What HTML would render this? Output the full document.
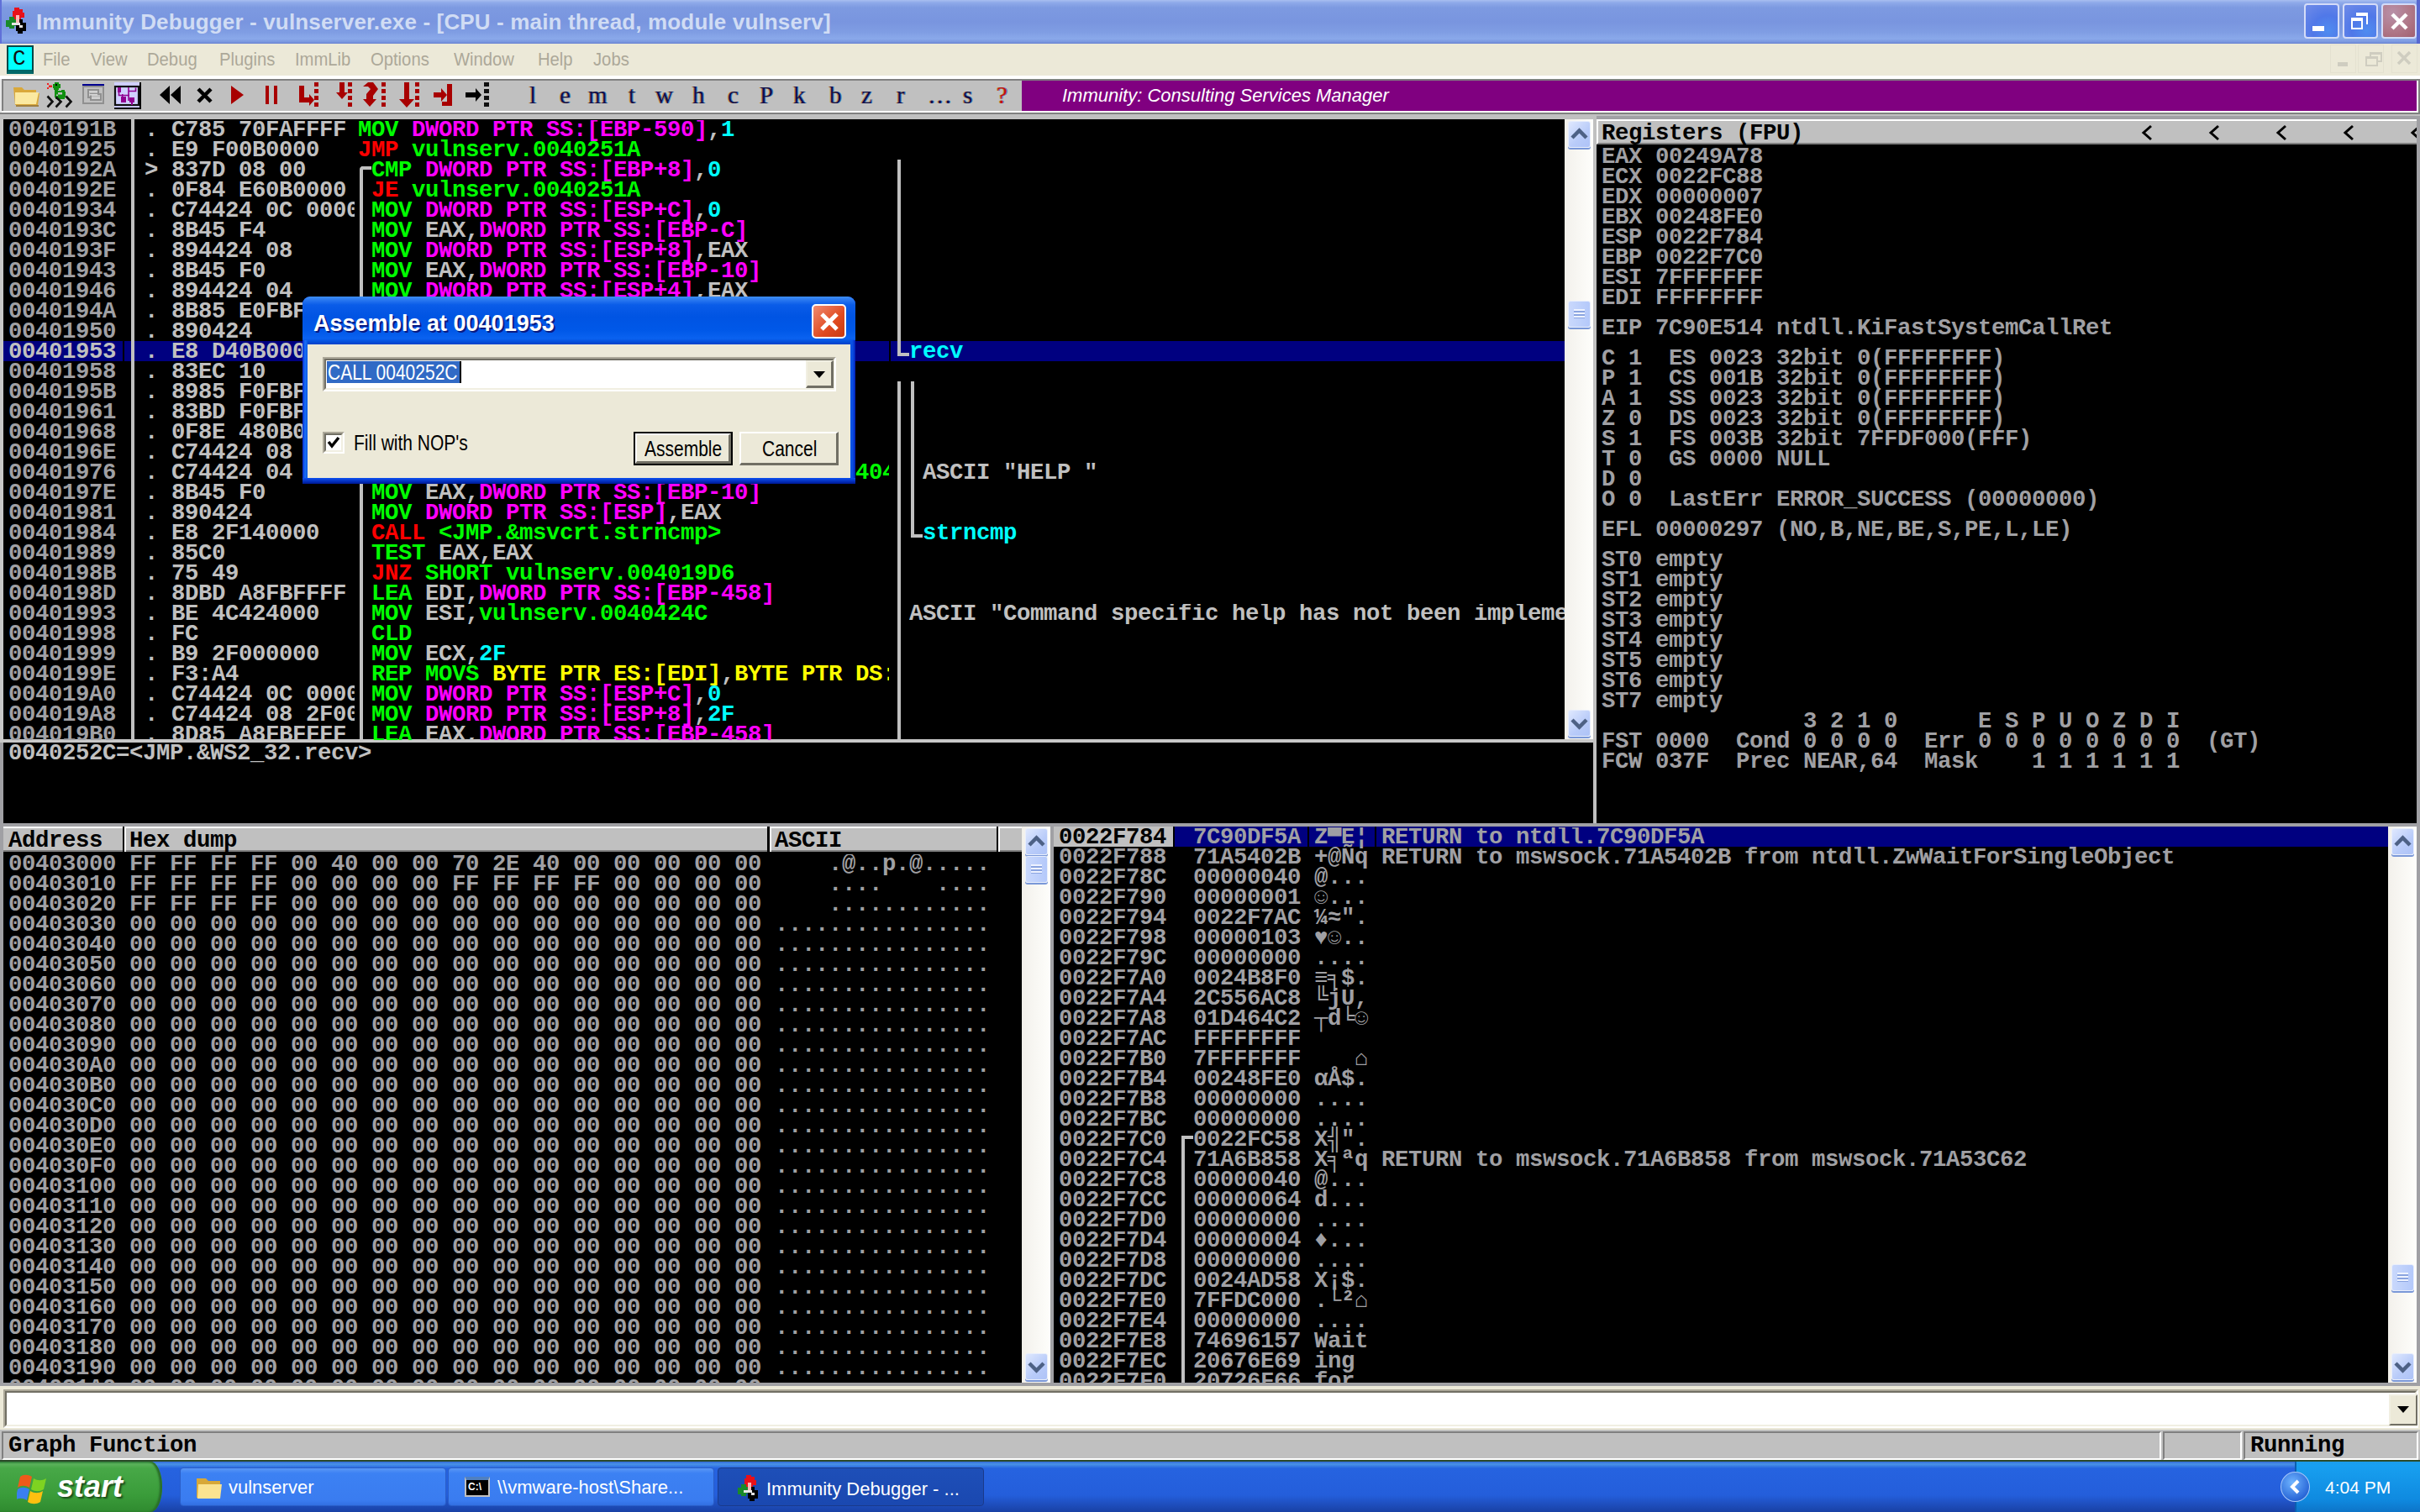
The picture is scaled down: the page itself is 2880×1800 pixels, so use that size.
<!DOCTYPE html><html><head><meta charset="utf-8"><title>Immunity Debugger</title><style>
html,body{margin:0;padding:0;}
body{width:2880px;height:1800px;overflow:hidden;position:relative;background:#c0c0c0;}
.a{position:absolute;box-sizing:border-box;}
.m{font-family:"Liberation Mono",monospace;font-weight:bold;font-size:27.33px;letter-spacing:-0.4px;line-height:24px;white-space:pre;}
.s{font-family:"Liberation Sans",sans-serif;white-space:pre;}
.clip{overflow:hidden;}
.cg{color:#00ff00}.cr{color:#ff0000}.cm{color:#ff00ff}.cc{color:#00ffff}.cy{color:#ffff00}.cl{color:#c0c0c0}.cd{color:#a0a0a4}.ck{color:#000000}.cw{color:#ffffff}</style></head><body><div class="a " style="left:0px;top:0px;width:2880px;height:52px;background:linear-gradient(#a9bff0 0px,#8faaea 3px,#7d9ae1 9px,#7995df 26px,#7f9de3 38px,#8aa9ea 46px,#7b98df 50px,#6680d0 52px);"></div>
<svg class="a" style="left:3px;top:6px" width="30" height="34" viewBox="0 0 30 34">
<path d="M14 3h6v2h4v4h2v6h-4v3h-8v-3h-2v-8h2z" fill="#e8101a"/>
<path d="M8 14h6v3h4v8h-4v3h-6v-2h-4v-8h4z" fill="#1a8a2a"/>
<path d="M18 17h6v4h4v10h-4v3h-6v-3h-2v-10h2z" fill="#000"/>
<path d="M11 21h10v3h-10z" fill="#e8e8e8"/><path d="M16 12h4v9h-4z" fill="#ffb8b8"/><path d="M20 24h4v3h-4z" fill="#e0e0e0"/>
</svg>
<div class="a s" style="left:43px;top:6px;font-weight:bold;font-size:26px;line-height:40px;color:#d0dcf4;letter-spacing:0.15px;">Immunity Debugger - vulnserver.exe - [CPU - main thread, module vulnserv]</div>
<div class="a " style="left:2742px;top:4px;width:42px;height:42px;background:radial-gradient(circle at 70% 80%,#4f8cf0,#5078e8 45%,#6a88e8 90%);border:2px solid #d4dcf8;border-radius:4px;"><div class="a" style="left:8px;top:25px;width:14px;height:6px;background:#fff"></div></div>
<div class="a " style="left:2788px;top:4px;width:42px;height:42px;background:radial-gradient(circle at 70% 80%,#4f8cf0,#5078e8 45%,#6a88e8 90%);border:2px solid #d4dcf8;border-radius:4px;"><div class="a" style="left:14px;top:9px;width:14px;height:14px;border:2px solid #fff;border-top-width:4px;border-left:none;border-bottom:none"></div><div class="a" style="left:8px;top:15px;width:14px;height:14px;border:2px solid #fff;border-top-width:4px;"></div></div>
<div class="a " style="left:2834px;top:4px;width:42px;height:42px;background:radial-gradient(circle at 30% 25%,#b890a8,#b07888 55%,#a06070);border:2px solid #d4dcf8;border-radius:4px;"><svg class="a" style="left:8px;top:8px" width="24" height="24"><path d="M3 3L20 20M20 3L3 20" stroke="#fff" stroke-width="4.5"/></svg></div>
<div class="a " style="left:2876px;top:0px;width:4px;height:52px;background:#5868d0;"></div>
<div class="a " style="left:0px;top:0px;width:2px;height:52px;background:#6070d8;"></div>
<div class="a " style="left:0px;top:52px;width:2880px;height:38px;background:#ece9d8;"></div>
<div class="a " style="left:8px;top:54px;width:32px;height:34px;background:#00ffff;border:2px solid #004848;border-bottom:5px solid #006868;"><div class="a m" style="left:5px;top:2px;color:#101010;font-weight:normal;font-size:26px;">C</div></div>
<div class="a s" style="left:51px;top:57px;font-size:22px;line-height:28px;color:#aca899;transform:scaleX(0.92);transform-origin:0 0;">File</div>
<div class="a s" style="left:108px;top:57px;font-size:22px;line-height:28px;color:#aca899;transform:scaleX(0.92);transform-origin:0 0;">View</div>
<div class="a s" style="left:175px;top:57px;font-size:22px;line-height:28px;color:#aca899;transform:scaleX(0.92);transform-origin:0 0;">Debug</div>
<div class="a s" style="left:261px;top:57px;font-size:22px;line-height:28px;color:#aca899;transform:scaleX(0.92);transform-origin:0 0;">Plugins</div>
<div class="a s" style="left:351px;top:57px;font-size:22px;line-height:28px;color:#aca899;transform:scaleX(0.92);transform-origin:0 0;">ImmLib</div>
<div class="a s" style="left:441px;top:57px;font-size:22px;line-height:28px;color:#aca899;transform:scaleX(0.92);transform-origin:0 0;">Options</div>
<div class="a s" style="left:540px;top:57px;font-size:22px;line-height:28px;color:#aca899;transform:scaleX(0.92);transform-origin:0 0;">Window</div>
<div class="a s" style="left:640px;top:57px;font-size:22px;line-height:28px;color:#aca899;transform:scaleX(0.92);transform-origin:0 0;">Help</div>
<div class="a s" style="left:706px;top:57px;font-size:22px;line-height:28px;color:#aca899;transform:scaleX(0.92);transform-origin:0 0;">Jobs</div>
<div class="a " style="left:2773px;top:53px;width:31px;height:34px;border:1px solid #e4e1d0;background:#ece9d8;"></div>
<div class="a " style="left:2806px;top:53px;width:31px;height:34px;border:1px solid #e4e1d0;background:#ece9d8;"></div>
<div class="a " style="left:2846px;top:53px;width:31px;height:34px;border:1px solid #e4e1d0;background:#ece9d8;"></div>
<div class="a" style="left:2782px;top:74px;width:12px;height:5px;background:#cfcdc0"></div>
<div class="a" style="left:2820px;top:62px;width:15px;height:12px;border:2px solid #cfcdc0;border-top-width:3px"></div><div class="a" style="left:2815px;top:67px;width:15px;height:12px;border:2px solid #cfcdc0;border-top-width:3px;background:#ece9d8"></div>
<svg class="a" style="left:2852px;top:60px" width="18" height="18"><path d="M2 2L16 16M16 2L2 16" stroke="#cfcdc0" stroke-width="3.5"/></svg>
<div class="a " style="left:0px;top:90px;width:2880px;height:4px;background:#ffffff;"></div>
<div class="a " style="left:0px;top:94px;width:2880px;height:42px;background:#c0c0c0;"></div>
<div class="a " style="left:2px;top:94px;width:2878px;height:40px;border-top:2px solid #808080;border-left:2px solid #808080;"></div>
<div class="a " style="left:0px;top:94px;width:2px;height:42px;background:#e8e8e8;"></div>
<div class="a " style="left:2px;top:132px;width:2876px;height:2px;background:#ffffff;"></div>
<div class="a " style="left:0px;top:134px;width:2880px;height:2px;background:#808080;"></div>
<div class="a " style="left:2878px;top:94px;width:2px;height:42px;background:#808080;"></div>
<svg class="a" style="left:0px;top:94px" width="600" height="40" viewBox="0 94 600 40">
<!-- folder -->
<path d="M16 104h10l3 3h14v4h4l-2 14H18z" fill="#d9a83a"/>
<path d="M18 110h28l-3 14H18z" fill="#fbe9a0"/>
<path d="M19 125h27v2H19z" fill="#a08040"/>
<!-- snake -->
<rect x="56" y="99" width="2" height="2" fill="#f02020"/><rect x="56" y="104" width="2" height="2" fill="#f02020"/><rect x="58" y="101.5" width="4" height="2.5" fill="#f02020"/>
<path d="M63 100h2v-2h5v2h2v5h-2v2h-1v1h4v-1h4v2h1v7h-1v2h-11v-2h-1v-9h-1v-2h-1z" fill="#109010"/>
<rect x="66" y="100" width="2" height="2" fill="#000"/>
<rect x="69" y="110" width="5" height="2.5" fill="#c0c0c0"/><rect x="67" y="112.5" width="2" height="1.5" fill="#c0c0c0"/>
<path d="M56.5 114.5l6 6.5-6 6.5M66.5 115.5l6 5.5-6 6.5M78.5 114.5l6 6.5-6 6.5" stroke="#101010" stroke-width="2.6" fill="none"/>
<!-- window icon -->
<rect x="98" y="100" width="26" height="2.5" fill="#000090"/>
<rect x="99" y="103" width="24" height="20" fill="none" stroke="#909090" stroke-width="2"/>
<rect x="105" y="107" width="12" height="9" fill="none" stroke="#909090" stroke-width="2"/>
<rect x="108" y="112" width="12" height="7" fill="#c0c0c0" stroke="#909090" stroke-width="2"/>
<rect x="106" y="108" width="10" height="1.5" fill="#d8d8d8"/><rect x="106" y="112" width="10" height="1.5" fill="#d8d8d8"/><rect x="109" y="116" width="10" height="1.5" fill="#d8d8d8"/>
<!-- graph icon -->
<rect x="136" y="98" width="30" height="30" fill="#d0d0ff"/>
<rect x="137" y="103" width="28" height="22" fill="none" stroke="#101010" stroke-width="2.2"/>
<rect x="166" y="98" width="2" height="32" fill="#000"/><rect x="136" y="128" width="32" height="2" fill="#000"/>
<rect x="140" y="104" width="4" height="6" fill="#900090"/>
<path d="M141.5 104v9.5h12.5M153 104v16M153 108.5h8.5v-4" stroke="#900090" stroke-width="1.6" fill="none"/>
<rect x="144" y="115" width="6" height="7" fill="#900090"/><rect x="145" y="112" width="1.5" height="3" fill="#900090"/>
<rect x="154" y="116" width="6" height="6" fill="#900090"/><rect x="156" y="122" width="2" height="3" fill="#900090"/>
<!-- rewind -->
<path d="M190 113l12-11v22zM203 113l12-11v22z" fill="#000"/>
<!-- close X -->
<path d="M236 106l15 15M251 106l-15 15" stroke="#000" stroke-width="4.5"/>
<!-- play -->
<path d="M275 102l15 11-15 11z" fill="#a80000"/>
<!-- pause -->
<rect x="316" y="102" width="4" height="22" fill="#a80000"/><rect x="326" y="102" width="4" height="22" fill="#a80000"/>
<!-- step into -->
<path d="M356 102h6v14h6v-4l6 7-6 7v-4h-12z" fill="#a80000"/>
<path d="M374 98h5v5h-5zM374 106h5v5h-5zM374 114h5v5h-5zM374 122h5v5h-5z" fill="#a80000"/>
<path d="M404 98h6v12h4l-7 8-7-8h4z" fill="#a80000"/>
<path d="M414 98h5v5h-5zM414 106h5v5h-5zM414 114h5v5h-5zM414 122h5v5h-5z" fill="#a80000"/>
<path d="M438 98h6l6 8-6 8v4h4l-8 9-8-9h4v-6l5-6-3-3h-6z" fill="#a80000"/>
<path d="M454 98h5v5h-5zM454 106h5v5h-5zM454 114h5v5h-5zM454 122h5v5h-5z" fill="#a80000"/>
<path d="M481 98h6v20h6l-9 10-9-10h6z" fill="#a80000"/>
<path d="M494 98h5v5h-5zM494 106h5v5h-5zM494 114h5v5h-5zM494 122h5v5h-5z" fill="#a80000"/>
<path d="M516 110h9v-5l7 8-7 8v-5h-9z" fill="#a80000"/>
<path d="M532 100h6v26h-12v-5h6z" fill="#a80000"/>
<path d="M554 110h12v-5l7 8-7 8v-5h-12z" fill="#000"/>
<path d="M576 98h6v5h-6zM576 106h6v5h-6zM576 114h6v5h-6zM576 122h6v5h-6z" fill="#101010"/>
</svg>
<div class="a" style="left:630px;top:96px;font-family:'Liberation Serif',serif;font-size:29px;line-height:34px;color:#10104a;white-space:pre;text-shadow:-1px 0 #c08840,1px 0 #4080c0">l</div>
<div class="a" style="left:666px;top:96px;font-family:'Liberation Serif',serif;font-size:29px;line-height:34px;color:#10104a;white-space:pre;text-shadow:-1px 0 #c08840,1px 0 #4080c0">e</div>
<div class="a" style="left:700px;top:96px;font-family:'Liberation Serif',serif;font-size:29px;line-height:34px;color:#10104a;white-space:pre;text-shadow:-1px 0 #c08840,1px 0 #4080c0">m</div>
<div class="a" style="left:748px;top:96px;font-family:'Liberation Serif',serif;font-size:29px;line-height:34px;color:#10104a;white-space:pre;text-shadow:-1px 0 #c08840,1px 0 #4080c0">t</div>
<div class="a" style="left:780px;top:96px;font-family:'Liberation Serif',serif;font-size:29px;line-height:34px;color:#10104a;white-space:pre;text-shadow:-1px 0 #c08840,1px 0 #4080c0">w</div>
<div class="a" style="left:824px;top:96px;font-family:'Liberation Serif',serif;font-size:29px;line-height:34px;color:#10104a;white-space:pre;text-shadow:-1px 0 #c08840,1px 0 #4080c0">h</div>
<div class="a" style="left:866px;top:96px;font-family:'Liberation Serif',serif;font-size:29px;line-height:34px;color:#10104a;white-space:pre;text-shadow:-1px 0 #c08840,1px 0 #4080c0">c</div>
<div class="a" style="left:904px;top:96px;font-family:'Liberation Serif',serif;font-size:29px;line-height:34px;color:#10104a;white-space:pre;text-shadow:-1px 0 #c08840,1px 0 #4080c0">P</div>
<div class="a" style="left:944px;top:96px;font-family:'Liberation Serif',serif;font-size:29px;line-height:34px;color:#10104a;white-space:pre;text-shadow:-1px 0 #c08840,1px 0 #4080c0">k</div>
<div class="a" style="left:987px;top:96px;font-family:'Liberation Serif',serif;font-size:29px;line-height:34px;color:#10104a;white-space:pre;text-shadow:-1px 0 #c08840,1px 0 #4080c0">b</div>
<div class="a" style="left:1025px;top:96px;font-family:'Liberation Serif',serif;font-size:29px;line-height:34px;color:#10104a;white-space:pre;text-shadow:-1px 0 #c08840,1px 0 #4080c0">z</div>
<div class="a" style="left:1067px;top:96px;font-family:'Liberation Serif',serif;font-size:29px;line-height:34px;color:#10104a;white-space:pre;text-shadow:-1px 0 #c08840,1px 0 #4080c0">r</div>
<div class="a" style="left:1104px;top:96px;font-family:'Liberation Serif',serif;font-size:29px;line-height:34px;color:#10104a;white-space:pre;text-shadow:-1px 0 #c08840,1px 0 #4080c0">…</div>
<div class="a" style="left:1146px;top:96px;font-family:'Liberation Serif',serif;font-size:29px;line-height:34px;color:#10104a;white-space:pre;text-shadow:-1px 0 #c08840,1px 0 #4080c0">s</div>
<div class="a" style="left:1186px;top:96px;font-family:'Liberation Serif',serif;font-size:29px;line-height:34px;color:#c01010;white-space:pre;text-shadow:-1px 0 #c08840,1px 0 #4080c0">?</div>
<div class="a " style="left:1216px;top:96px;width:1662px;height:38px;background:#800080;border-right:2px solid #fff;border-bottom:2px solid #fff;"></div>
<div class="a s" style="left:1264px;top:98px;font-style:italic;font-size:22px;line-height:32px;color:#ffffff;"><span class="cw">Immunity: Consulting Services Manager</span></div>
<div class="a " style="left:0px;top:136px;width:2880px;height:6px;background:#c0c0c0;"></div>
<div class="a " style="left:0px;top:142px;width:4px;height:1504px;background:#c8c8c8;"></div>
<div class="a " style="left:4px;top:142px;width:1858px;height:738px;background:#000;"></div>
<div class="a" style="left:1862px;top:142px;width:34px;height:738px;background:linear-gradient(90deg,#f3f1ec,#fefefb);border-left:1px solid #f0efe8"></div><div class="a" style="left:1866px;top:144px;width:27px;height:32px;border-radius:3px;background:linear-gradient(135deg,#dfe8fe,#b8cbf9 60%,#aec3f7);border:1px solid #e8eefc;box-shadow:0 2px 0 #7a98d8"></div><svg class="a" style="left:1866px;top:144px" width="27" height="32"><path d="M5 20l8.5-8.5 8.5 8.5" stroke="#4d6185" stroke-width="4.5" fill="none"/></svg><div class="a" style="left:1866px;top:845px;width:27px;height:32px;border-radius:3px;background:linear-gradient(135deg,#dfe8fe,#b8cbf9 60%,#aec3f7);border:1px solid #e8eefc;box-shadow:0 2px 0 #7a98d8"></div><svg class="a" style="left:1866px;top:845px" width="27" height="32"><path d="M5 12l8.5 8.5 8.5-8.5" stroke="#4d6185" stroke-width="4.5" fill="none"/></svg><div class="a" style="left:1866px;top:358px;width:27px;height:32px;border-radius:3px;background:linear-gradient(90deg,#c9d8fc,#b4c9fa);border:1px solid #e8eefc;box-shadow:0 2px 0 #7a98d8"></div><div class="a" style="left:1873px;top:368px;width:13px;height:11px;background:repeating-linear-gradient(#eef3ff 0 2px,#8aa4e0 2px 4px)"></div>
<div class="a " style="left:1896px;top:142px;width:4px;height:842px;background:#c0c0c0;"></div>
<div class="a " style="left:0px;top:880px;width:1896px;height:4px;background:#c8c8c8;"></div>
<div class="a " style="left:4px;top:884px;width:1892px;height:96px;background:#000;"></div>
<div class="a " style="left:0px;top:884px;width:4px;height:96px;background:#a0a0a4;"></div>
<div class="a " style="left:1900px;top:138px;width:980px;height:4px;background:#a0a0a4;"></div>
<div class="a " style="left:1900px;top:142px;width:976px;height:838px;background:#000;"></div>
<div class="a " style="left:2876px;top:138px;width:4px;height:846px;background:#a0a0a4;"></div>
<div class="a " style="left:1900px;top:142px;width:976px;height:30px;background:#c0c0c0;border-top:2px solid #fff;border-left:2px solid #fff;border-bottom:2px solid #808080;"></div>
<div class="a " style="left:0px;top:980px;width:2880px;height:4px;background:#a0a0a4;"></div>
<div class="a " style="left:0px;top:984px;width:4px;height:662px;background:#a0a0a4;"></div>
<div class="a " style="left:4px;top:984px;width:1212px;height:662px;background:#000;"></div>
<div class="a" style="left:1216px;top:984px;width:34px;height:662px;background:linear-gradient(90deg,#f3f1ec,#fefefb);border-left:1px solid #f0efe8"></div><div class="a" style="left:1220px;top:986px;width:27px;height:32px;border-radius:3px;background:linear-gradient(135deg,#dfe8fe,#b8cbf9 60%,#aec3f7);border:1px solid #e8eefc;box-shadow:0 2px 0 #7a98d8"></div><svg class="a" style="left:1220px;top:986px" width="27" height="32"><path d="M5 20l8.5-8.5 8.5 8.5" stroke="#4d6185" stroke-width="4.5" fill="none"/></svg><div class="a" style="left:1220px;top:1611px;width:27px;height:32px;border-radius:3px;background:linear-gradient(135deg,#dfe8fe,#b8cbf9 60%,#aec3f7);border:1px solid #e8eefc;box-shadow:0 2px 0 #7a98d8"></div><svg class="a" style="left:1220px;top:1611px" width="27" height="32"><path d="M5 12l8.5 8.5 8.5-8.5" stroke="#4d6185" stroke-width="4.5" fill="none"/></svg><div class="a" style="left:1220px;top:1019px;width:27px;height:32px;border-radius:3px;background:linear-gradient(90deg,#c9d8fc,#b4c9fa);border:1px solid #e8eefc;box-shadow:0 2px 0 #7a98d8"></div><div class="a" style="left:1227px;top:1029px;width:13px;height:11px;background:repeating-linear-gradient(#eef3ff 0 2px,#8aa4e0 2px 4px)"></div>
<div class="a " style="left:1250px;top:984px;width:4px;height:662px;background:#a0a0a4;"></div>
<div class="a " style="left:1254px;top:984px;width:1588px;height:662px;background:#000;"></div>
<div class="a" style="left:2842px;top:984px;width:34px;height:662px;background:linear-gradient(90deg,#f3f1ec,#fefefb);border-left:1px solid #f0efe8"></div><div class="a" style="left:2846px;top:986px;width:27px;height:32px;border-radius:3px;background:linear-gradient(135deg,#dfe8fe,#b8cbf9 60%,#aec3f7);border:1px solid #e8eefc;box-shadow:0 2px 0 #7a98d8"></div><svg class="a" style="left:2846px;top:986px" width="27" height="32"><path d="M5 20l8.5-8.5 8.5 8.5" stroke="#4d6185" stroke-width="4.5" fill="none"/></svg><div class="a" style="left:2846px;top:1611px;width:27px;height:32px;border-radius:3px;background:linear-gradient(135deg,#dfe8fe,#b8cbf9 60%,#aec3f7);border:1px solid #e8eefc;box-shadow:0 2px 0 #7a98d8"></div><svg class="a" style="left:2846px;top:1611px" width="27" height="32"><path d="M5 12l8.5 8.5 8.5-8.5" stroke="#4d6185" stroke-width="4.5" fill="none"/></svg><div class="a" style="left:2846px;top:1505px;width:27px;height:32px;border-radius:3px;background:linear-gradient(90deg,#c9d8fc,#b4c9fa);border:1px solid #e8eefc;box-shadow:0 2px 0 #7a98d8"></div><div class="a" style="left:2853px;top:1515px;width:13px;height:11px;background:repeating-linear-gradient(#eef3ff 0 2px,#8aa4e0 2px 4px)"></div>
<div class="a " style="left:2876px;top:984px;width:4px;height:662px;background:#a0a0a4;"></div>
<div class="a " style="left:0px;top:1646px;width:2880px;height:4px;background:#a0a0a4;"></div>
<div class="a " style="left:4px;top:406px;width:142px;height:24px;background:#000080;"></div>
<div class="a " style="left:148px;top:406px;width:8px;height:24px;background:#000080;"></div>
<div class="a " style="left:160px;top:406px;width:262px;height:24px;background:#000080;"></div>
<div class="a " style="left:424px;top:406px;width:634px;height:24px;background:#000080;"></div>
<div class="a " style="left:1060px;top:406px;width:802px;height:24px;background:#000080;"></div>
<div class="a " style="left:156px;top:142px;width:4px;height:738px;background:#c0c0c0;"></div>
<div class="a m clip" style="left:10px;top:143px;width:136px;height:738px;"><div style="height:24px"><span class="cd">0040191B</span></div><div style="height:24px"><span class="cd">00401925</span></div><div style="height:24px"><span class="cd">0040192A</span></div><div style="height:24px"><span class="cd">0040192E</span></div><div style="height:24px"><span class="cd">00401934</span></div><div style="height:24px"><span class="cd">0040193C</span></div><div style="height:24px"><span class="cd">0040193F</span></div><div style="height:24px"><span class="cd">00401943</span></div><div style="height:24px"><span class="cd">00401946</span></div><div style="height:24px"><span class="cd">0040194A</span></div><div style="height:24px"><span class="cd">00401950</span></div><div style="height:24px"><span class="cl">00401953</span></div><div style="height:24px"><span class="cd">00401958</span></div><div style="height:24px"><span class="cd">0040195B</span></div><div style="height:24px"><span class="cd">00401961</span></div><div style="height:24px"><span class="cd">00401968</span></div><div style="height:24px"><span class="cd">0040196E</span></div><div style="height:24px"><span class="cd">00401976</span></div><div style="height:24px"><span class="cd">0040197E</span></div><div style="height:24px"><span class="cd">00401981</span></div><div style="height:24px"><span class="cd">00401984</span></div><div style="height:24px"><span class="cd">00401989</span></div><div style="height:24px"><span class="cd">0040198B</span></div><div style="height:24px"><span class="cd">0040198D</span></div><div style="height:24px"><span class="cd">00401993</span></div><div style="height:24px"><span class="cd">00401998</span></div><div style="height:24px"><span class="cd">00401999</span></div><div style="height:24px"><span class="cd">0040199E</span></div><div style="height:24px"><span class="cd">004019A0</span></div><div style="height:24px"><span class="cd">004019A8</span></div><div style="height:24px"><span class="cd">004019B0</span></div></div>
<div class="a m clip" style="left:172px;top:143px;width:250px;height:738px;"><div style="height:24px"><span class="cl">. C785 70FAFFFF</span></div><div style="height:24px"><span class="cl">. E9 F00B0000</span></div><div style="height:24px"><span class="cl">&gt; 837D 08 00</span></div><div style="height:24px"><span class="cl">. 0F84 E60B0000</span></div><div style="height:24px"><span class="cl">. C74424 0C 00000000</span></div><div style="height:24px"><span class="cl">. 8B45 F4</span></div><div style="height:24px"><span class="cl">. 894424 08</span></div><div style="height:24px"><span class="cl">. 8B45 F0</span></div><div style="height:24px"><span class="cl">. 894424 04</span></div><div style="height:24px"><span class="cl">. 8B85 E0FBFFFF</span></div><div style="height:24px"><span class="cl">. 890424</span></div><div style="height:24px"><span class="cl">. E8 D40B0000</span></div><div style="height:24px"><span class="cl">. 83EC 10</span></div><div style="height:24px"><span class="cl">. 8985 F0FBFFFF</span></div><div style="height:24px"><span class="cl">. 83BD F0FBFFFF 00</span></div><div style="height:24px"><span class="cl">. 0F8E 480B0000</span></div><div style="height:24px"><span class="cl">. C74424 08 05000000</span></div><div style="height:24px"><span class="cl">. C74424 04 44404000</span></div><div style="height:24px"><span class="cl">. 8B45 F0</span></div><div style="height:24px"><span class="cl">. 890424</span></div><div style="height:24px"><span class="cl">. E8 2F140000</span></div><div style="height:24px"><span class="cl">. 85C0</span></div><div style="height:24px"><span class="cl">. 75 49</span></div><div style="height:24px"><span class="cl">. 8DBD A8FBFFFF</span></div><div style="height:24px"><span class="cl">. BE 4C424000</span></div><div style="height:24px"><span class="cl">. FC</span></div><div style="height:24px"><span class="cl">. B9 2F000000</span></div><div style="height:24px"><span class="cl">. F3:A4</span></div><div style="height:24px"><span class="cl">. C74424 0C 00000000</span></div><div style="height:24px"><span class="cl">. C74424 08 2F000000</span></div><div style="height:24px"><span class="cl">. 8D85 A8FBFFFF</span></div></div>
<div class="a m clip" style="left:426px;top:143px;width:632px;height:738px;"><div style="height:24px"><span class="cg">MOV </span><span class="cm">DWORD PTR SS:[EBP-590]</span><span class="cl">,</span><span class="cc">1</span></div><div style="height:24px"><span class="cr">JMP </span><span class="cg">vulnserv.0040251A</span></div><div style="height:24px"><span class="cl"> </span><span class="cg">CMP </span><span class="cm">DWORD PTR SS:[EBP+8]</span><span class="cl">,</span><span class="cc">0</span></div><div style="height:24px"><span class="cl"> </span><span class="cr">JE </span><span class="cg">vulnserv.0040251A</span></div><div style="height:24px"><span class="cl"> </span><span class="cg">MOV </span><span class="cm">DWORD PTR SS:[ESP+C]</span><span class="cl">,</span><span class="cc">0</span></div><div style="height:24px"><span class="cl"> </span><span class="cg">MOV </span><span class="cl">EAX,</span><span class="cm">DWORD PTR SS:[EBP-C]</span></div><div style="height:24px"><span class="cl"> </span><span class="cg">MOV </span><span class="cm">DWORD PTR SS:[ESP+8]</span><span class="cl">,EAX</span></div><div style="height:24px"><span class="cl"> </span><span class="cg">MOV </span><span class="cl">EAX,</span><span class="cm">DWORD PTR SS:[EBP-10]</span></div><div style="height:24px"><span class="cl"> </span><span class="cg">MOV </span><span class="cm">DWORD PTR SS:[ESP+4]</span><span class="cl">,EAX</span></div><div style="height:24px"><span class="cl"> </span><span class="cg">MOV </span><span class="cl">EAX,</span><span class="cm">DWORD PTR SS:[EBP-420]</span></div><div style="height:24px"><span class="cl"> </span><span class="cg">MOV </span><span class="cm">DWORD PTR SS:[ESP]</span><span class="cl">,EAX</span></div><div style="height:24px"><span class="cl"> </span><span class="cr">CALL </span><span class="cg">&lt;JMP.&amp;WS2_32.recv&gt;</span></div><div style="height:24px"><span class="cl"> </span><span class="cg">SUB </span><span class="cl">ESP,</span><span class="cc">10</span></div><div style="height:24px"><span class="cl"> </span><span class="cg">MOV </span><span class="cm">DWORD PTR SS:[EBP-410]</span><span class="cl">,EAX</span></div><div style="height:24px"><span class="cl"> </span><span class="cg">CMP </span><span class="cm">DWORD PTR SS:[EBP-410]</span><span class="cl">,</span><span class="cc">0</span></div><div style="height:24px"><span class="cl"> </span><span class="cr">JLE </span><span class="cg">vulnserv.004024B6</span></div><div style="height:24px"><span class="cl"> </span><span class="cg">MOV </span><span class="cm">DWORD PTR SS:[ESP+8]</span><span class="cl">,</span><span class="cc">5</span></div><div style="height:24px"><span class="cl"> </span><span class="cg">MOV </span><span class="cm">DWORD PTR SS:[ESP+4]</span><span class="cl">,</span><span class="cg">vulnserv.00404044</span></div><div style="height:24px"><span class="cl"> </span><span class="cg">MOV </span><span class="cl">EAX,</span><span class="cm">DWORD PTR SS:[EBP-10]</span></div><div style="height:24px"><span class="cl"> </span><span class="cg">MOV </span><span class="cm">DWORD PTR SS:[ESP]</span><span class="cl">,EAX</span></div><div style="height:24px"><span class="cl"> </span><span class="cr">CALL </span><span class="cg">&lt;JMP.&amp;msvcrt.strncmp&gt;</span></div><div style="height:24px"><span class="cl"> </span><span class="cg">TEST </span><span class="cl">EAX,EAX</span></div><div style="height:24px"><span class="cl"> </span><span class="cr">JNZ </span><span class="cg">SHORT vulnserv.004019D6</span></div><div style="height:24px"><span class="cl"> </span><span class="cg">LEA </span><span class="cl">EDI,</span><span class="cm">DWORD PTR SS:[EBP-458]</span></div><div style="height:24px"><span class="cl"> </span><span class="cg">MOV </span><span class="cl">ESI,</span><span class="cg">vulnserv.0040424C</span></div><div style="height:24px"><span class="cl"> </span><span class="cg">CLD</span></div><div style="height:24px"><span class="cl"> </span><span class="cg">MOV </span><span class="cl">ECX,</span><span class="cc">2F</span></div><div style="height:24px"><span class="cl"> </span><span class="cg">REP MOVS </span><span class="cy">BYTE PTR ES:[EDI]</span><span class="cl">,</span><span class="cy">BYTE PTR DS:[ESI]</span></div><div style="height:24px"><span class="cl"> </span><span class="cg">MOV </span><span class="cm">DWORD PTR SS:[ESP+C]</span><span class="cl">,</span><span class="cc">0</span></div><div style="height:24px"><span class="cl"> </span><span class="cg">MOV </span><span class="cm">DWORD PTR SS:[ESP+8]</span><span class="cl">,</span><span class="cc">2F</span></div><div style="height:24px"><span class="cl"> </span><span class="cg">LEA </span><span class="cl">EAX,</span><span class="cm">DWORD PTR SS:[EBP-458]</span></div></div>
<div class="a " style="left:428px;top:198px;width:4px;height:682px;background:#c0c0c0;border-top-left-radius:4px;"></div>
<div class="a " style="left:430px;top:198px;width:12px;height:4px;background:#c0c0c0;"></div>
<div class="a " style="left:1068px;top:190px;width:4px;height:234px;background:#c0c0c0;"></div>
<div class="a " style="left:1068px;top:420px;width:14px;height:4px;background:#c0c0c0;"></div>
<div class="a " style="left:1068px;top:454px;width:4px;height:426px;background:#c0c0c0;"></div>
<div class="a " style="left:1084px;top:454px;width:4px;height:186px;background:#c0c0c0;"></div>
<div class="a " style="left:1084px;top:636px;width:14px;height:4px;background:#c0c0c0;"></div>
<div class="a m clip" style="left:1082px;top:407px;width:780px;height:24px"><span class="cc">recv</span></div>
<div class="a m clip" style="left:1098px;top:551px;width:764px;height:24px"><span class="cl">ASCII "HELP "</span></div>
<div class="a m clip" style="left:1098px;top:623px;width:764px;height:24px"><span class="cc">strncmp</span></div>
<div class="a m clip" style="left:1082px;top:719px;width:780px;height:24px"><span class="cl">ASCII "Command specific help has not been implemented."</span></div>
<div class="a m" style="left:10px;top:885px;"><span class="cl">0040252C=&lt;JMP.&amp;WS2_32.recv&gt;</span></div>
<div class="a m" style="left:1906px;top:146px;line-height:26px;"><span class="ck">Registers (FPU)</span></div>
<svg class="a" style="left:2548px;top:148px" width="14" height="20"><path d="M12 2L3 10l9 8" stroke="#000" stroke-width="3" fill="none"/></svg>
<svg class="a" style="left:2628px;top:148px" width="14" height="20"><path d="M12 2L3 10l9 8" stroke="#000" stroke-width="3" fill="none"/></svg>
<svg class="a" style="left:2708px;top:148px" width="14" height="20"><path d="M12 2L3 10l9 8" stroke="#000" stroke-width="3" fill="none"/></svg>
<svg class="a" style="left:2788px;top:148px" width="14" height="20"><path d="M12 2L3 10l9 8" stroke="#000" stroke-width="3" fill="none"/></svg>
<svg class="a" style="left:2868px;top:148px" width="8" height="20"><path d="M12 2L3 10l9 8" stroke="#000" stroke-width="3" fill="none"/></svg>
<div class="a m" style="left:1906px;top:175px;"><span class="cd">EAX 00249A78</span></div>
<div class="a m" style="left:1906px;top:199px;"><span class="cd">ECX 0022FC88</span></div>
<div class="a m" style="left:1906px;top:223px;"><span class="cd">EDX 00000007</span></div>
<div class="a m" style="left:1906px;top:247px;"><span class="cd">EBX 00248FE0</span></div>
<div class="a m" style="left:1906px;top:271px;"><span class="cd">ESP 0022F784</span></div>
<div class="a m" style="left:1906px;top:295px;"><span class="cd">EBP 0022F7C0</span></div>
<div class="a m" style="left:1906px;top:319px;"><span class="cd">ESI 7FFFFFFF</span></div>
<div class="a m" style="left:1906px;top:343px;"><span class="cd">EDI FFFFFFFF</span></div>
<div class="a m" style="left:1906px;top:379px;"><span class="cd">EIP 7C90E514 ntdll.KiFastSystemCallRet</span></div>
<div class="a m" style="left:1906px;top:415px;"><span class="cd">C 1  ES 0023 32bit 0(FFFFFFFF)</span></div>
<div class="a m" style="left:1906px;top:439px;"><span class="cd">P 1  CS 001B 32bit 0(FFFFFFFF)</span></div>
<div class="a m" style="left:1906px;top:463px;"><span class="cd">A 1  SS 0023 32bit 0(FFFFFFFF)</span></div>
<div class="a m" style="left:1906px;top:487px;"><span class="cd">Z 0  DS 0023 32bit 0(FFFFFFFF)</span></div>
<div class="a m" style="left:1906px;top:511px;"><span class="cd">S 1  FS 003B 32bit 7FFDF000(FFF)</span></div>
<div class="a m" style="left:1906px;top:535px;"><span class="cd">T 0  GS 0000 NULL</span></div>
<div class="a m" style="left:1906px;top:559px;"><span class="cd">D 0</span></div>
<div class="a m" style="left:1906px;top:583px;"><span class="cd">O 0  LastErr ERROR_SUCCESS (00000000)</span></div>
<div class="a m" style="left:1906px;top:619px;"><span class="cd">EFL 00000297 (NO,B,NE,BE,S,PE,L,LE)</span></div>
<div class="a m" style="left:1906px;top:655px;"><span class="cd">ST0 empty</span></div>
<div class="a m" style="left:1906px;top:679px;"><span class="cd">ST1 empty</span></div>
<div class="a m" style="left:1906px;top:703px;"><span class="cd">ST2 empty</span></div>
<div class="a m" style="left:1906px;top:727px;"><span class="cd">ST3 empty</span></div>
<div class="a m" style="left:1906px;top:751px;"><span class="cd">ST4 empty</span></div>
<div class="a m" style="left:1906px;top:775px;"><span class="cd">ST5 empty</span></div>
<div class="a m" style="left:1906px;top:799px;"><span class="cd">ST6 empty</span></div>
<div class="a m" style="left:1906px;top:823px;"><span class="cd">ST7 empty</span></div>
<div class="a m" style="left:1906px;top:847px;"><span class="cd">               3 2 1 0      E S P U O Z D I</span></div>
<div class="a m" style="left:1906px;top:871px;"><span class="cd">FST 0000  Cond 0 0 0 0  Err 0 0 0 0 0 0 0 0  (GT)</span></div>
<div class="a m" style="left:1906px;top:895px;"><span class="cd">FCW 037F  Prec NEAR,64  Mask    1 1 1 1 1 1</span></div>
<div class="a " style="left:4px;top:984px;width:1212px;height:30px;background:#c0c0c0;border-top:2px solid #fff;border-bottom:2px solid #808080;"></div>
<div class="a " style="left:146px;top:984px;width:2px;height:30px;background:#000;"></div>
<div class="a " style="left:148px;top:986px;width:2px;height:28px;background:#fff;"></div>
<div class="a " style="left:913px;top:984px;width:3px;height:30px;background:#000;"></div>
<div class="a " style="left:916px;top:986px;width:2px;height:28px;background:#fff;"></div>
<div class="a " style="left:1186px;top:984px;width:2px;height:30px;background:#000;"></div>
<div class="a " style="left:1188px;top:986px;width:2px;height:28px;background:#fff;"></div>
<div class="a m" style="left:10px;top:987px;line-height:28px;"><span class="ck">Address</span></div>
<div class="a m" style="left:154px;top:987px;line-height:28px;"><span class="ck">Hex dump</span></div>
<div class="a m" style="left:922px;top:987px;line-height:28px;"><span class="ck">ASCII</span></div>
<div class="a m clip" style="left:10px;top:1017px;width:1206px;height:630px;"><div style="height:24px"><span class="cd">00403000 FF FF FF FF 00 40 00 00 70 2E 40 00 00 00 00 00     .@..p.@.....</span></div><div style="height:24px"><span class="cd">00403010 FF FF FF FF 00 00 00 00 FF FF FF FF 00 00 00 00     ....    ....</span></div><div style="height:24px"><span class="cd">00403020 FF FF FF FF 00 00 00 00 00 00 00 00 00 00 00 00     ............</span></div><div style="height:24px"><span class="cd">00403030 00 00 00 00 00 00 00 00 00 00 00 00 00 00 00 00 ................</span></div><div style="height:24px"><span class="cd">00403040 00 00 00 00 00 00 00 00 00 00 00 00 00 00 00 00 ................</span></div><div style="height:24px"><span class="cd">00403050 00 00 00 00 00 00 00 00 00 00 00 00 00 00 00 00 ................</span></div><div style="height:24px"><span class="cd">00403060 00 00 00 00 00 00 00 00 00 00 00 00 00 00 00 00 ................</span></div><div style="height:24px"><span class="cd">00403070 00 00 00 00 00 00 00 00 00 00 00 00 00 00 00 00 ................</span></div><div style="height:24px"><span class="cd">00403080 00 00 00 00 00 00 00 00 00 00 00 00 00 00 00 00 ................</span></div><div style="height:24px"><span class="cd">00403090 00 00 00 00 00 00 00 00 00 00 00 00 00 00 00 00 ................</span></div><div style="height:24px"><span class="cd">004030A0 00 00 00 00 00 00 00 00 00 00 00 00 00 00 00 00 ................</span></div><div style="height:24px"><span class="cd">004030B0 00 00 00 00 00 00 00 00 00 00 00 00 00 00 00 00 ................</span></div><div style="height:24px"><span class="cd">004030C0 00 00 00 00 00 00 00 00 00 00 00 00 00 00 00 00 ................</span></div><div style="height:24px"><span class="cd">004030D0 00 00 00 00 00 00 00 00 00 00 00 00 00 00 00 00 ................</span></div><div style="height:24px"><span class="cd">004030E0 00 00 00 00 00 00 00 00 00 00 00 00 00 00 00 00 ................</span></div><div style="height:24px"><span class="cd">004030F0 00 00 00 00 00 00 00 00 00 00 00 00 00 00 00 00 ................</span></div><div style="height:24px"><span class="cd">00403100 00 00 00 00 00 00 00 00 00 00 00 00 00 00 00 00 ................</span></div><div style="height:24px"><span class="cd">00403110 00 00 00 00 00 00 00 00 00 00 00 00 00 00 00 00 ................</span></div><div style="height:24px"><span class="cd">00403120 00 00 00 00 00 00 00 00 00 00 00 00 00 00 00 00 ................</span></div><div style="height:24px"><span class="cd">00403130 00 00 00 00 00 00 00 00 00 00 00 00 00 00 00 00 ................</span></div><div style="height:24px"><span class="cd">00403140 00 00 00 00 00 00 00 00 00 00 00 00 00 00 00 00 ................</span></div><div style="height:24px"><span class="cd">00403150 00 00 00 00 00 00 00 00 00 00 00 00 00 00 00 00 ................</span></div><div style="height:24px"><span class="cd">00403160 00 00 00 00 00 00 00 00 00 00 00 00 00 00 00 00 ................</span></div><div style="height:24px"><span class="cd">00403170 00 00 00 00 00 00 00 00 00 00 00 00 00 00 00 00 ................</span></div><div style="height:24px"><span class="cd">00403180 00 00 00 00 00 00 00 00 00 00 00 00 00 00 00 00 ................</span></div><div style="height:24px"><span class="cd">00403190 00 00 00 00 00 00 00 00 00 00 00 00 00 00 00 00 ................</span></div><div style="height:24px"><span class="cd">004031A0 00 00 00 00 00 00 00 00 00 00 00 00 00 00 00 00 ................</span></div></div>
<div class="a " style="left:1254px;top:984px;width:142px;height:24px;background:#c0c0c0;"></div>
<div class="a " style="left:1398px;top:984px;width:158px;height:24px;background:#000080;"></div>
<div class="a " style="left:1558px;top:984px;width:78px;height:24px;background:#000080;"></div>
<div class="a " style="left:1638px;top:984px;width:1204px;height:24px;background:#000080;"></div>
<div class="a m clip" style="left:1260px;top:985px;width:1582px;height:662px;"><div style="height:24px"><span class="ck">0022F784</span><span class="cd">  7C90DF5A Z▀É¦ RETURN to ntdll.7C90DF5A</span></div><div style="height:24px"><span class="cd">0022F788</span><span class="cd">  71A5402B +@Ñq RETURN to mswsock.71A5402B from ntdll.ZwWaitForSingleObject</span></div><div style="height:24px"><span class="cd">0022F78C</span><span class="cd">  00000040 @... </span></div><div style="height:24px"><span class="cd">0022F790</span><span class="cd">  00000001 ☺... </span></div><div style="height:24px"><span class="cd">0022F794</span><span class="cd">  0022F7AC ¼≈". </span></div><div style="height:24px"><span class="cd">0022F798</span><span class="cd">  00000103 ♥☺.. </span></div><div style="height:24px"><span class="cd">0022F79C</span><span class="cd">  00000000 .... </span></div><div style="height:24px"><span class="cd">0022F7A0</span><span class="cd">  0024B8F0 ≡╕$. </span></div><div style="height:24px"><span class="cd">0022F7A4</span><span class="cd">  2C556AC8 ╚jU, </span></div><div style="height:24px"><span class="cd">0022F7A8</span><span class="cd">  01D464C2 ┬d╘☺ </span></div><div style="height:24px"><span class="cd">0022F7AC</span><span class="cd">  FFFFFFFF      </span></div><div style="height:24px"><span class="cd">0022F7B0</span><span class="cd">  7FFFFFFF    ⌂ </span></div><div style="height:24px"><span class="cd">0022F7B4</span><span class="cd">  00248FE0 αÅ$. </span></div><div style="height:24px"><span class="cd">0022F7B8</span><span class="cd">  00000000 .... </span></div><div style="height:24px"><span class="cd">0022F7BC</span><span class="cd">  00000000 .... </span></div><div style="height:24px"><span class="cd">0022F7C0</span><span class="cd">  0022FC58 X╣". </span></div><div style="height:24px"><span class="cd">0022F7C4</span><span class="cd">  71A6B858 X╕ªq RETURN to mswsock.71A6B858 from mswsock.71A53C62</span></div><div style="height:24px"><span class="cd">0022F7C8</span><span class="cd">  00000040 @... </span></div><div style="height:24px"><span class="cd">0022F7CC</span><span class="cd">  00000064 d... </span></div><div style="height:24px"><span class="cd">0022F7D0</span><span class="cd">  00000000 .... </span></div><div style="height:24px"><span class="cd">0022F7D4</span><span class="cd">  00000004 ♦... </span></div><div style="height:24px"><span class="cd">0022F7D8</span><span class="cd">  00000000 .... </span></div><div style="height:24px"><span class="cd">0022F7DC</span><span class="cd">  0024AD58 X¡$. </span></div><div style="height:24px"><span class="cd">0022F7E0</span><span class="cd">  7FFDC000 .└²⌂ </span></div><div style="height:24px"><span class="cd">0022F7E4</span><span class="cd">  00000000 .... </span></div><div style="height:24px"><span class="cd">0022F7E8</span><span class="cd">  74696157 Wait </span></div><div style="height:24px"><span class="cd">0022F7EC</span><span class="cd">  20676E69 ing  </span></div><div style="height:24px"><span class="cd">0022F7F0</span><span class="cd">  20726F66 for  </span></div></div>
<div class="a " style="left:1406px;top:1352px;width:4px;height:294px;background:#c0c0c0;border-top-left-radius:3px;"></div>
<div class="a " style="left:1406px;top:1352px;width:14px;height:4px;background:#c0c0c0;"></div>
<div class="a " style="left:0px;top:1650px;width:2880px;height:52px;background:#ece9d8;"></div>
<div class="a " style="left:4px;top:1654px;width:2874px;height:46px;background:#fff;border-top:2px solid #aca899;border-left:2px solid #aca899;border-right:2px solid #fff;border-bottom:2px solid #fff;"></div>
<div class="a " style="left:6px;top:1656px;width:2870px;height:42px;background:#fff;border-top:2px solid #716f64;border-left:2px solid #716f64;border-right:2px solid #f1efe2;border-bottom:2px solid #f1efe2;"></div>
<div class="a " style="left:2843px;top:1660px;width:34px;height:37px;background:#ece9d8;border-top:2px solid #f1efe2;border-left:2px solid #f1efe2;border-right:2px solid #716f64;border-bottom:2px solid #716f64;"></div>
<svg class="a" style="left:2851px;top:1672px" width="18" height="12"><path d="M2 2h14l-7 8z" fill="#000"/></svg>
<div class="a " style="left:0px;top:1702px;width:2880px;height:38px;background:#c0c0c0;"></div>
<div class="a " style="left:2px;top:1704px;width:2570px;height:34px;border-top:2px solid #808080;border-left:2px solid #808080;border-bottom:2px solid #fff;border-right:2px solid #fff;"></div>
<div class="a " style="left:2574px;top:1704px;width:94px;height:34px;border-top:2px solid #808080;border-left:2px solid #808080;border-bottom:2px solid #fff;border-right:2px solid #fff;"></div>
<div class="a " style="left:2670px;top:1704px;width:208px;height:34px;border-top:2px solid #808080;border-left:2px solid #808080;border-bottom:2px solid #fff;border-right:2px solid #fff;"></div>
<div class="a m" style="left:10px;top:1707px;line-height:28px;"><span class="ck">Graph Function</span></div>
<div class="a m" style="left:2678px;top:1707px;line-height:28px;"><span class="ck">Running</span></div>
<div class="a " style="left:0px;top:1738px;width:2880px;height:2px;background:#2c4a2a;"></div>
<div class="a " style="left:0px;top:1740px;width:2880px;height:60px;background:linear-gradient(#3168d5 0px,#4993e6 3px,#2663e0 8px,#245edb 40px,#1941a5 60px);"></div>
<div class="a " style="left:0px;top:1740px;width:193px;height:60px;background:linear-gradient(#2f7f3a 0px,#5ab25a 3px,#47a847 8px,#3a9c3a 40px,#2f8a2f 60px);border-radius:0 14px 14px 0/0 30px 30px 0;box-shadow:inset -3px 0 2px #2a6e2a;"></div>
<svg class="a" style="left:20px;top:1752px" width="40" height="40" viewBox="0 0 40 40">
<path d="M4 6c4-3 9-3 14 0l-3 13c-5-3-10-3-14 0z" fill="#f05a1a"/>
<path d="M20 8c5 3 10 3 15 0l-3 13c-5 3-10 3-15 0z" fill="#7ed321"/>
<path d="M1 21c4-3 9-3 14 0l-3 13c-5-3-10-3-14 0z" fill="#3a7ff0"/>
<path d="M16 23c5 3 10 3 15 0l-3 13c-5 3-10 3-15 0z" fill="#ffc010"/>
</svg>
<div class="a s" style="left:68px;top:1748px;font-style:italic;font-weight:bold;font-size:36px;line-height:44px;color:#fff;text-shadow:2px 2px 2px #1a4a1a;"><span class="cw">start</span></div>
<div class="a " style="left:214px;top:1747px;width:317px;height:46px;background:linear-gradient(#5a97f5 0px,#3c81f3 6px,#3a7cf0 38px,#2f6bde 46px);border:1px solid #2a5ec8;border-radius:4px;"></div>
<div class="a " style="left:533px;top:1747px;width:317px;height:46px;background:linear-gradient(#5a97f5 0px,#3c81f3 6px,#3a7cf0 38px,#2f6bde 46px);border:1px solid #2a5ec8;border-radius:4px;"></div>
<div class="a " style="left:854px;top:1747px;width:317px;height:46px;background:linear-gradient(#1e4fb8,#1a48b0);border:1px solid #1a3a8a;border-radius:4px;"></div>
<svg class="a" style="left:232px;top:1756px" width="34" height="30" viewBox="0 0 34 30">
<path d="M2 4h11l3 3h14v20H2z" fill="#d8a838"/><path d="M4 11h28l-2 17H3z" fill="#fbe390"/></svg>
<div class="a s" style="left:272px;top:1751px;font-size:22px;line-height:40px;color:#fff;"><span class="cw">vulnserver</span></div>
<div class="a " style="left:553px;top:1758px;width:30px;height:24px;background:#000;border:2px solid #c0c0c0;border-top:4px solid #5080c0;"><div class="a s" style="left:2px;top:-2px;font-size:12px;line-height:20px;color:#fff;font-weight:bold">C:\</div></div>
<div class="a s" style="left:592px;top:1751px;font-size:22px;line-height:40px;color:#fff;"><span class="cw">\\vmware-host\Share...</span></div>
<svg class="a" style="left:874px;top:1753px" width="30" height="34" viewBox="0 0 30 34">
<path d="M14 3h6v2h4v4h2v6h-4v3h-8v-3h-2v-8h2z" fill="#e8101a"/>
<path d="M8 14h6v3h4v8h-4v3h-6v-2h-4v-8h4z" fill="#1a8a2a"/>
<path d="M18 17h6v4h4v10h-4v3h-6v-3h-2v-10h2z" fill="#000"/>
<path d="M11 21h10v3h-10z" fill="#e8e8e8"/><path d="M16 12h4v9h-4z" fill="#ffb8b8"/><path d="M20 24h4v3h-4z" fill="#e0e0e0"/>
</svg>
<div class="a s" style="left:912px;top:1753px;font-size:22px;line-height:40px;color:#fff;"><span class="cw">Immunity Debugger - ...</span></div>
<div class="a " style="left:2731px;top:1740px;width:149px;height:60px;background:linear-gradient(#1b9be8 0px,#18a0f0 4px,#0f8ae0 45px,#0d74c8 60px);border-left:2px solid #0a5fb0;"></div>
<div class="a " style="left:2714px;top:1752px;width:35px;height:36px;background:radial-gradient(circle at 40% 35%,#6fb4ff,#2a68d8 70%,#1a4cb0);border-radius:50%;border:1px solid #a8c8f8;"></div>
<svg class="a" style="left:2722px;top:1760px" width="20" height="20"><path d="M13 3l-7 7 7 7" stroke="#fff" stroke-width="4" fill="none"/></svg>
<div class="a s" style="left:2767px;top:1751px;font-size:21px;line-height:40px;color:#fff;"><span class="cw">4:04 PM</span></div>
<div class="a" style="left:360px;top:353px;width:658px;height:223px;background:#0831d9;border-radius:9px 9px 0 0;"></div>
<div class="a " style="left:360px;top:353px;width:658px;height:57px;border-radius:9px 9px 0 0;background:linear-gradient(#3e8ff5 0px,#2a78f0 4px,#0a5ce8 10px,#0054e3 24px,#0058e8 40px,#0a62f0 50px,#0040c8 57px);"></div>
<div class="a " style="left:360px;top:405px;width:6px;height:171px;background:linear-gradient(90deg,#0a2ad0 0px,#0b3ee0 1px,#1a70f2 3px,#0a58e8 6px);"></div>
<div class="a " style="left:1012px;top:405px;width:6px;height:171px;background:linear-gradient(90deg,#0a58e8 0px,#0b4ae0 3px,#0030c8 5px,#0a1ab0 6px);"></div>
<div class="a " style="left:360px;top:569px;width:658px;height:7px;background:linear-gradient(#0a50f0 0px,#0a40d8 2px,#0028b0 5px,#001890 7px);"></div>
<div class="a " style="left:366px;top:410px;width:646px;height:159px;background:#ece9d8;"></div>
<div class="a s" style="left:373px;top:365px;font-weight:bold;font-size:27px;line-height:40px;color:#fff;text-shadow:2px 2px 0 #0a1a80;"><span class="cw">Assemble at 00401953</span></div>
<div class="a " style="left:966px;top:362px;width:41px;height:41px;background:linear-gradient(135deg,#f08a70,#e04a20 60%,#c83a10);border:2px solid #fff;border-radius:5px;"><svg class="a" style="left:7px;top:7px" width="24" height="24"><path d="M3 3L21 21M21 3L3 21" stroke="#fff" stroke-width="5"/></svg></div>
<div class="a " style="left:384px;top:425px;width:611px;height:41px;background:#fff;border-top:2px solid #aca899;border-left:2px solid #aca899;border-bottom:2px solid #fff;border-right:2px solid #fff;"></div>
<div class="a " style="left:386px;top:427px;width:607px;height:37px;background:#fff;border-top:2px solid #716f64;border-left:2px solid #716f64;border-bottom:2px solid #f1efe2;border-right:2px solid #f1efe2;"></div>
<div class="a " style="left:389px;top:430px;width:158px;height:26px;background:#316ac5;"></div>
<div class="a " style="left:547px;top:430px;width:2px;height:26px;background:#000;"></div>
<div class="a s" style="left:390px;top:428px;font-size:25px;line-height:30px;color:#fff;transform:scaleX(0.84);transform-origin:0 0;"><span class="cw">CALL 0040252C</span></div>
<div class="a " style="left:959px;top:429px;width:33px;height:33px;background:#ece9d8;border-top:2px solid #f1efe2;border-left:2px solid #f1efe2;border-right:3px solid #716f64;border-bottom:3px solid #716f64;"></div>
<svg class="a" style="left:967px;top:441px" width="16" height="10"><path d="M1 1h14l-7 8z" fill="#000"/></svg>
<div class="a " style="left:384px;top:514px;width:26px;height:26px;background:#fff;border-top:2px solid #aca899;border-left:2px solid #aca899;border-bottom:2px solid #fff;border-right:2px solid #fff;"></div>
<div class="a " style="left:386px;top:516px;width:22px;height:22px;background:#fff;border-top:2px solid #716f64;border-left:2px solid #716f64;border-bottom:2px solid #f1efe2;border-right:2px solid #f1efe2;"></div>
<svg class="a" style="left:388px;top:518px" width="18" height="18"><path d="M3 8l4 5 8-10" stroke="#000" stroke-width="3.5" fill="none"/></svg>
<div class="a s" style="left:421px;top:512px;font-size:25px;line-height:30px;color:#000;transform:scaleX(0.84);transform-origin:0 0;"><span class="ck">Fill with NOP's</span></div>
<div class="a " style="left:754px;top:514px;width:118px;height:40px;background:#ece9d8;border:2px solid #000;"><div class="a" style="left:0;top:0;right:0;bottom:0;border-top:2px solid #fff;border-left:2px solid #fff;border-right:3px solid #716f64;border-bottom:3px solid #716f64"></div></div>
<div class="a s" style="left:767px;top:517px;font-size:25px;line-height:34px;color:#000;transform:scaleX(0.84);transform-origin:0 0;"><span class="ck">Assemble</span></div>
<div class="a " style="left:880px;top:514px;width:118px;height:40px;background:#ece9d8;border-top:2px solid #fff;border-left:2px solid #fff;border-right:3px solid #716f64;border-bottom:3px solid #716f64;"></div>
<div class="a s" style="left:907px;top:517px;font-size:25px;line-height:34px;color:#000;transform:scaleX(0.84);transform-origin:0 0;"><span class="ck">Cancel</span></div></body></html>
